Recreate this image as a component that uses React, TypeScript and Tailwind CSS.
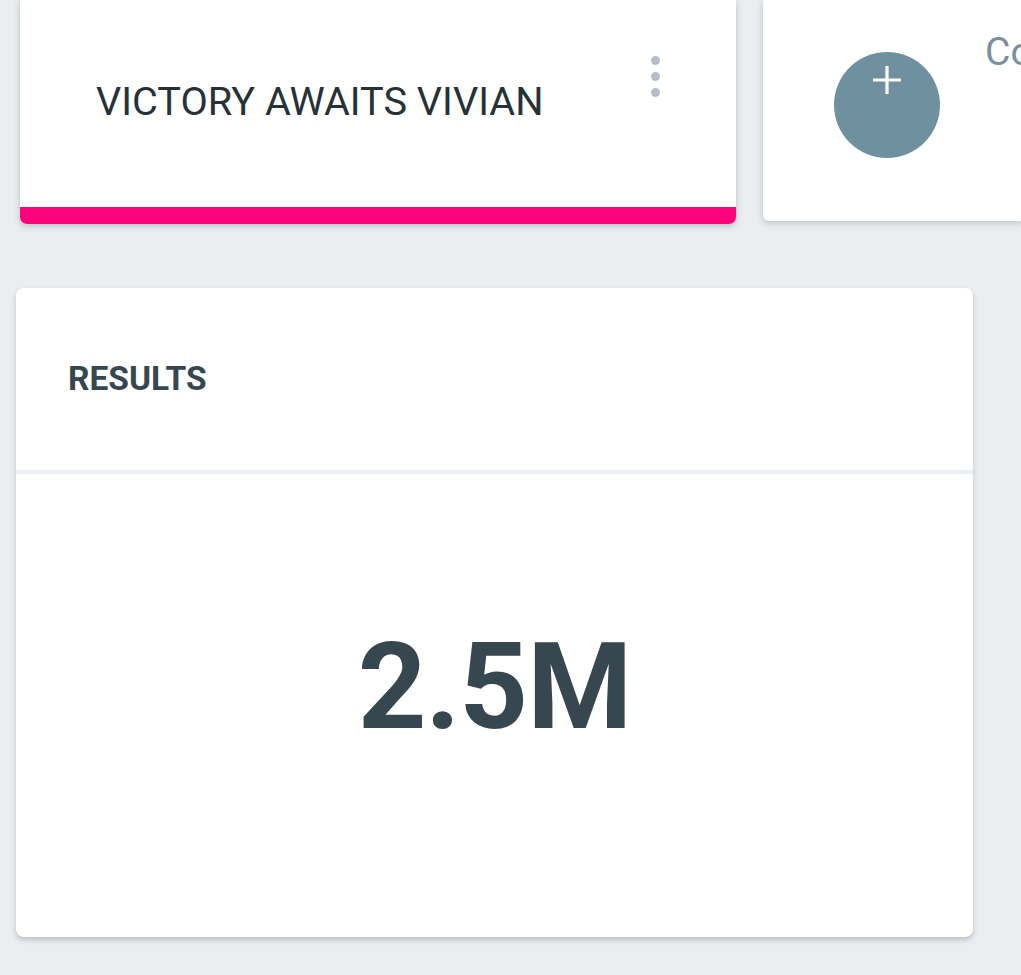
import React from 'react';

function Kebab() {
  return (
    <div className="flex flex-col gap-[7px] pt-[56px]">
      <span className="h-[9px] w-[9px] rounded-full bg-[#b3c0cb]" />
      <span className="h-[9px] w-[9px] rounded-full bg-[#b3c0cb]" />
      <span className="h-[9px] w-[9px] rounded-full bg-[#b3c0cb]" />
    </div>
  );
}

export default function App() {
  return (
    <div
      className="min-h-[975px] w-[1021px] overflow-hidden bg-[#eaeef1]"
      style={{ fontFamily: 'Roboto, "Liberation Sans", sans-serif' }}
    >
      <div className="flex items-start gap-[27px] pl-[20px]">
        <div className="flex h-[224px] w-[716px] shrink-0 flex-col overflow-hidden rounded-b-[7px] bg-white shadow-[0_2px_6px_rgba(60,70,80,0.28)]">
          <div className="flex flex-1 items-start justify-between pl-[76px] pr-[76px]">
            <h2 className="whitespace-nowrap pt-[80px] text-[39.7px] font-normal leading-[44px] text-[#263238]">
              VICTORY AWAITS VIVIAN
            </h2>
            <Kebab />
          </div>
          <div className="h-[17px] bg-[#ff037c]" />
        </div>

        <div className="flex h-[221px] flex-1 items-start overflow-hidden rounded-bl-[6px] bg-white pl-[71px] shadow-[0_2px_6px_rgba(60,70,80,0.28)]">
          <button
            type="button"
            className="mt-[52px] flex h-[106px] w-[106px] shrink-0 items-start justify-center rounded-full bg-[#6f909f] pt-[10px]"
          >
            <svg width="36" height="36" viewBox="0 0 36 36" fill="none" stroke="white" strokeWidth="3.2">
              <path d="M18 4v28M4 18h28" />
            </svg>
          </button>
          <span className="ml-[45px] whitespace-nowrap pt-[30px] text-[39px] leading-[44px] text-[#78909c]">
            Co
          </span>
        </div>
      </div>

      <div className="ml-[16px] mt-[64px] w-[957px] overflow-hidden rounded-[8px] bg-white shadow-[0_3px_5px_rgba(60,60,80,0.25)]">
        <div className="flex h-[182px] items-center pl-[52px]">
          <h3 className="text-[33.5px] font-bold leading-none text-[#37474f]">RESULTS</h3>
        </div>
        <div className="h-[4px] bg-[#e9eef2]" />
        <div className="flex h-[463px] items-center justify-center pb-[38px]">
          <span className="text-[120px] font-bold leading-none tracking-[-1px] text-[#37474f]">2.5M</span>
        </div>
      </div>
    </div>
  );
}
